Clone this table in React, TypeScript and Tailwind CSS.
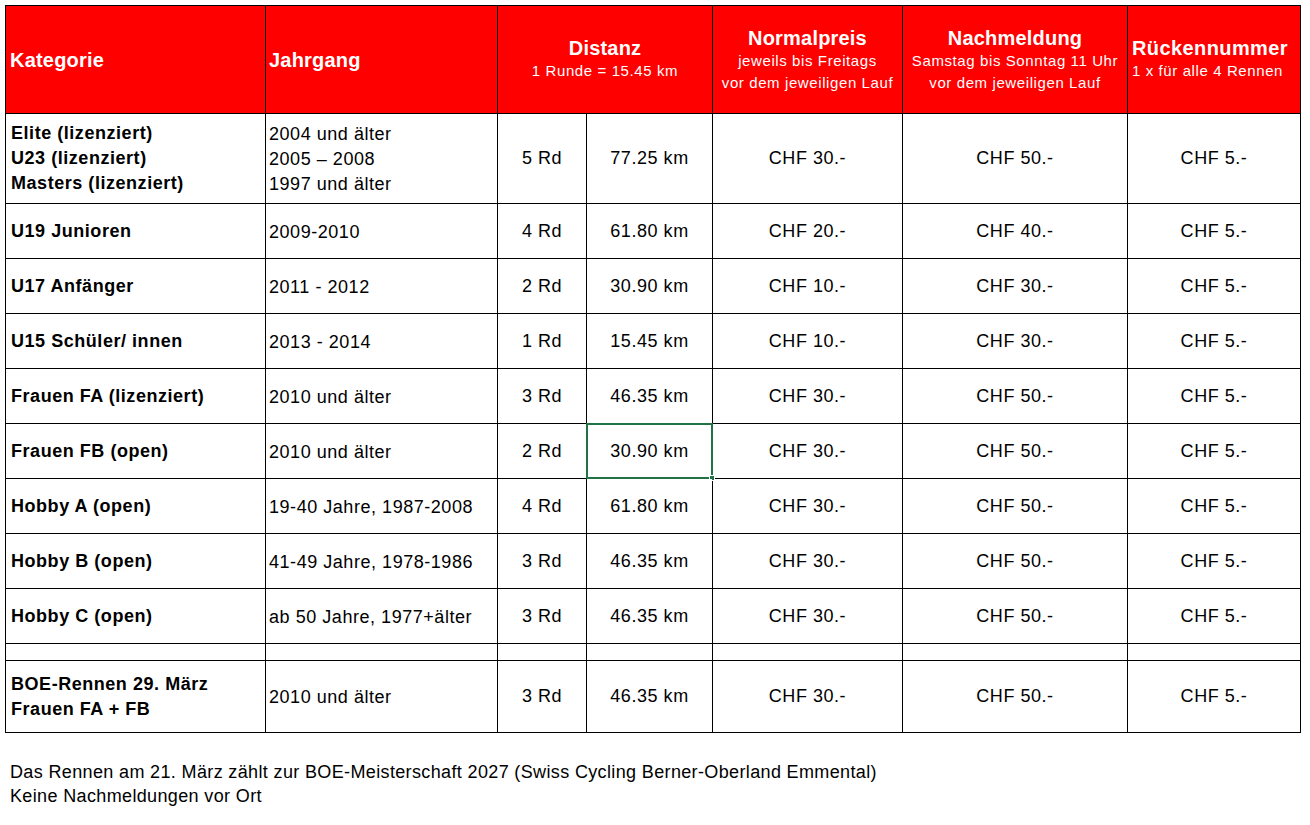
import React from "react";

type Row = {
  cat: string[];
  year: string[];
  laps: string;
  km: string;
  normal: string;
  late: string;
  bib: string;
  selected?: boolean;
};

const rows: Row[] = [
  {
    cat: ["Elite (lizenziert)", "U23 (lizenziert)", "Masters (lizenziert)"],
    year: ["2004 und älter", "2005 – 2008", "1997 und älter"],
    laps: "5 Rd",
    km: "77.25 km",
    normal: "CHF 30.-",
    late: "CHF 50.-",
    bib: "CHF 5.-",
  },
  { cat: ["U19 Junioren"], year: ["2009-2010"], laps: "4 Rd", km: "61.80 km", normal: "CHF 20.-", late: "CHF 40.-", bib: "CHF 5.-" },
  { cat: ["U17 Anfänger"], year: ["2011 - 2012"], laps: "2 Rd", km: "30.90 km", normal: "CHF 10.-", late: "CHF 30.-", bib: "CHF 5.-" },
  { cat: ["U15 Schüler/ innen"], year: ["2013 - 2014"], laps: "1 Rd", km: "15.45 km", normal: "CHF 10.-", late: "CHF 30.-", bib: "CHF 5.-" },
  { cat: ["Frauen FA (lizenziert)"], year: ["2010 und älter"], laps: "3 Rd", km: "46.35 km", normal: "CHF 30.-", late: "CHF 50.-", bib: "CHF 5.-" },
  { cat: ["Frauen FB (open)"], year: ["2010 und älter"], laps: "2 Rd", km: "30.90 km", normal: "CHF 30.-", late: "CHF 50.-", bib: "CHF 5.-", selected: true },
  { cat: ["Hobby A (open)"], year: ["19-40 Jahre, 1987-2008"], laps: "4 Rd", km: "61.80 km", normal: "CHF 30.-", late: "CHF 50.-", bib: "CHF 5.-" },
  { cat: ["Hobby B (open)"], year: ["41-49 Jahre, 1978-1986"], laps: "3 Rd", km: "46.35 km", normal: "CHF 30.-", late: "CHF 50.-", bib: "CHF 5.-" },
  { cat: ["Hobby C (open)"], year: ["ab 50 Jahre, 1977+älter"], laps: "3 Rd", km: "46.35 km", normal: "CHF 30.-", late: "CHF 50.-", bib: "CHF 5.-" },
];

const boe: Row = {
  cat: ["BOE-Rennen 29. März", "Frauen FA + FB"],
  year: ["2010 und älter"],
  laps: "3 Rd",
  km: "46.35 km",
  normal: "CHF 30.-",
  late: "CHF 50.-",
  bib: "CHF 5.-",
};

const cell = "flex flex-col justify-center bg-white text-[18px] leading-[25px] tracking-[0.03em] text-black";
const center = `${cell} items-center text-center`;

function DataRow({ r }: { r: Row }) {
  return (
    <>
      <div className={`${cell} pl-[5px] font-bold tracking-[0.02em]`}>
        {r.cat.map((c) => (
          <span key={c}>{c}</span>
        ))}
      </div>
      <div className={`${cell} pl-[3px] pt-[2px]`}>
        {r.year.map((y) => (
          <span key={y}>{y}</span>
        ))}
      </div>
      <div className={center}>{r.laps}</div>
      <div className={`${center} relative`}>
        {r.km}
        {r.selected && (
          <div className="pointer-events-none absolute -inset-px border-2 border-[#217346]">
            <span className="absolute -bottom-[4px] -right-[4px] h-[6px] w-[6px] border border-white bg-[#217346]" />
          </div>
        )}
      </div>
      <div className={center}>{r.normal}</div>
      <div className={center}>{r.late}</div>
      <div className={center}>{r.bib}</div>
    </>
  );
}

export default function App() {
  const head = "flex flex-col justify-center bg-[#ff0000] text-white";
  const title = "text-[20px] font-bold leading-[24px] tracking-[0.01em]";
  const sub = "text-[15px] leading-[22px] tracking-[0.04em]";

  return (
    <div className="min-h-[825px] bg-white p-[5px] font-['Liberation_Sans',Arial,sans-serif] text-black">
      <div className="grid w-[1296px] grid-cols-[259px_231px_88px_125px_189px_224px_172px] grid-rows-[107px_89px_repeat(8,54px)_16px_71px] gap-px border border-black bg-black">
        {/* header */}
        <div className={`${head} pl-[4px]`}>
          <span className={title}>Kategorie</span>
        </div>
        <div className={`${head} pl-[3px]`}>
          <span className={title}>Jahrgang</span>
        </div>
        <div className={`${head} col-span-2 items-center pb-[2px] text-center`}>
          <span className={title}>Distanz</span>
          <span className={sub}>1 Runde = 15.45 km</span>
        </div>
        <div className={`${head} items-center text-center`}>
          <span className={title}>Normalpreis</span>
          <span className={sub}>jeweils bis Freitags</span>
          <span className={sub}>vor dem jeweiligen Lauf</span>
        </div>
        <div className={`${head} items-center text-center`}>
          <span className={title}>Nachmeldung</span>
          <span className={sub}>Samstag bis Sonntag 11 Uhr</span>
          <span className={sub}>vor dem jeweiligen Lauf</span>
        </div>
        <div className={`${head} items-start pb-[2px] pl-[4px]`}>
          <span className={`${title} text-[20.5px] tracking-[0.02em]`}>Rückennummer</span>
          <span className={sub}>1 x für alle 4 Rennen</span>
        </div>

        {rows.map((r) => (
          <DataRow key={r.cat[0]} r={r} />
        ))}

        {/* empty spacer row */}
        {Array.from({ length: 7 }).map((_, i) => (
          <div key={i} className="bg-white" />
        ))}

        <DataRow r={boe} />
      </div>

      <div className="mt-[27px] pl-[5px] text-[18px] leading-[24px] tracking-[0.02em]">
        <p>Das Rennen am 21. März zählt zur BOE-Meisterschaft 2027 (Swiss Cycling Berner-Oberland Emmental)</p>
        <p>Keine Nachmeldungen vor Ort</p>
      </div>
    </div>
  );
}
